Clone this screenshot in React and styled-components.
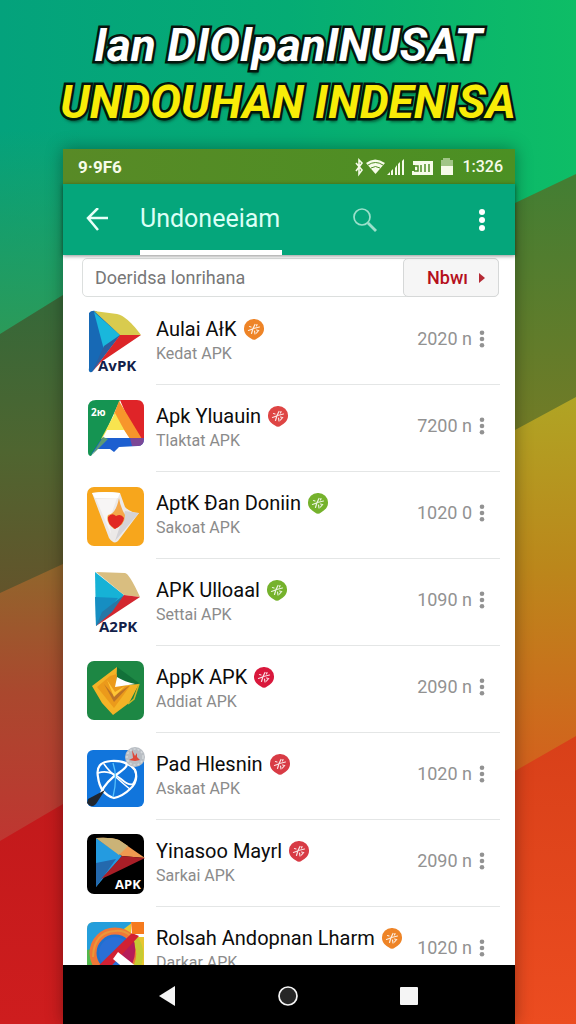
import React from 'react';
import styled, { createGlobalStyle } from 'styled-components';

const GlobalStyle = createGlobalStyle`
	* {
		box-sizing: border-box;
	}
	body {
		margin: 0;
		font-family: Roboto, "Liberation Sans", sans-serif;
	}
	h1, h2, p, ul {
		margin: 0;
		padding: 0;
	}
	button {
		font-family: inherit;
		border: 0;
		padding: 0;
		background: none;
		cursor: pointer;
	}
`;

const Page = styled.div`
	position: relative;
	display: flex;
	flex-direction: column;
	height: 100vh;
	overflow: hidden;
`;

const Backdrop = styled.svg`
	position: absolute;
	inset: 0;
	width: 100%;
	height: 100%;
	z-index: -1;
`;

const Headline = styled.h1`
	display: flex;
	flex-direction: column;
	align-items: center;
	padding-top: 17px;
	height: 149px;
	flex-shrink: 0;
	white-space: nowrap;
	font-style: italic;
	font-weight: 700;
`;

const HeadlineLine = styled.span`
	font-size: 46px;
	line-height: 57px;
	color: ${props => props.$color};
	-webkit-text-stroke: 5px #07130c;
	paint-order: stroke fill;
	text-shadow: 1px 4px 3px rgba(0, 30, 15, 0.55);
`;

const Phone = styled.main`
	display: flex;
	flex-direction: column;
	flex: 1;
	min-height: 0;
	margin: 0 61px 0 63px;
	background: #fff;
	box-shadow: 0 0 16px rgba(0, 0, 0, 0.35);
`;

const StatusBar = styled.div`
	display: flex;
	align-items: center;
	height: 35px;
	flex-shrink: 0;
	padding: 0 12px 0 15px;
	background: linear-gradient(90deg, #588a26, #4b9023);
	color: #f6fbe9;
	font-size: 17px;
	font-weight: 700;
`;

const StatusIcons = styled.svg`
	width: 102px;
	height: 20px;
	margin-left: auto;
	margin-right: 6px;
`;

const BatteryText = styled.span`
	font-size: 16px;
	font-weight: 500;
`;

const AppBar = styled.header`
	display: flex;
	align-items: center;
	position: relative;
	z-index: 1;
	height: 71px;
	flex-shrink: 0;
	padding: 0 21px;
	background: #05a67b;
	box-shadow: 0 1px 4px rgba(0, 0, 0, 0.45);
`;

const IconButton = styled.button`
	display: flex;
	align-items: center;
	justify-content: center;
	width: 26px;
	height: 32px;
`;

const Tab = styled.h2`
	align-self: stretch;
	width: 142px;
	margin-left: 30px;
	margin-right: 70px;
	border-bottom: 5px solid #fff;
	color: #dcfff6;
	font-size: 25px;
	font-weight: 400;
	line-height: 70px;
`;

const SearchRow = styled.form`
	display: flex;
	height: 39px;
	flex-shrink: 0;
	margin: 3px 16px 0 19px;
	border: 1px solid #dcdfde;
	border-radius: 5px;
`;

const SearchInput = styled.input`
	flex: 1;
	min-width: 0;
	border: 0;
	padding: 0 12px;
	background: none;
	font-family: inherit;
	font-size: 18px;
	color: #777;
	outline: none;
	&::placeholder {
		color: #777;
		opacity: 1;
	}
`;

const NowButton = styled.button`
	display: flex;
	align-items: center;
	justify-content: space-between;
	width: 96px;
	padding: 0 13px 0 23px;
	margin: -1px;
	background: #f6f6f6;
	border: 1px solid #d6d8d8;
	border-radius: 5px;
	color: #b5101c;
	font-size: 18px;
	font-weight: 500;
`;

const List = styled.ul`
	flex: 1;
	min-height: 0;
	overflow: hidden;
	list-style: none;
	padding: 1px 15px 0 24px;
`;

const Row = styled.li`
	display: flex;
	align-items: center;
	height: 87px;
`;

const AppIcon = styled.svg`
	width: 58px;
	height: 64px;
	flex-shrink: 0;
	margin-right: 11px;
	overflow: visible;
`;

const RowBody = styled.div`
	display: flex;
	align-items: center;
	flex: 1;
	align-self: stretch;
	border-bottom: 1px solid #e4e6e6;
`;

const Names = styled.div`
	flex: 1;
`;

const AppName = styled.p`
	display: flex;
	align-items: center;
	gap: 7px;
	color: #0c0c0c;
	font-size: 20px;
	line-height: 26px;
	white-space: nowrap;
`;

const Source = styled.p`
	color: #8b8b8b;
	font-size: 16px;
	line-height: 24px;
`;

const Amount = styled.span`
	color: #929292;
	font-size: 18px;
	line-height: 24px;
	white-space: nowrap;
	margin-bottom: 4px;
	margin-right: 4px;
`;

const MoreButton = styled(IconButton)`
	width: 12px;
	margin-right: 12px;
	margin-bottom: 4px;
`;

const MenuButton = styled(IconButton)`
	width: 12px;
	margin-left: auto;
	margin-right: 6px;
`;

const NavBar = styled.nav`
	display: flex;
	align-items: center;
	justify-content: space-between;
	height: 59px;
	flex-shrink: 0;
	padding: 2px 93px 0 91px;
	background: #000;
`;

function Background() {
	return (
		<Backdrop viewBox="0 0 576 1024" preserveAspectRatio="none" aria-hidden="true">
			<defs>
				<linearGradient id="top" x1="0" y1="0" x2="1" y2="0">
					<stop offset="0" stopColor="#04a27c" />
					<stop offset="0.5" stopColor="#05ac74" />
					<stop offset="1" stopColor="#0ebd66" />
				</linearGradient>
				<linearGradient id="topLeft" gradientUnits="userSpaceOnUse" x1="0" y1="130" x2="0" y2="334">
					<stop offset="0" stopColor="#2b9a59" stopOpacity="0" />
					<stop offset="1" stopColor="#2b9a59" />
				</linearGradient>
				<linearGradient id="l1" gradientUnits="userSpaceOnUse" x1="0" y1="310" x2="0" y2="593">
					<stop offset="0" stopColor="#376838" />
					<stop offset="0.5" stopColor="#4f6530" />
					<stop offset="1" stopColor="#63542b" />
				</linearGradient>
				<linearGradient id="l2" gradientUnits="userSpaceOnUse" x1="0" y1="570" x2="0" y2="841">
					<stop offset="0" stopColor="#91652c" />
					<stop offset="0.45" stopColor="#aa482e" />
					<stop offset="1" stopColor="#bf3631" />
				</linearGradient>
				<linearGradient id="l3" x1="0" y1="0" x2="0" y2="1">
					<stop offset="0" stopColor="#bd181a" />
					<stop offset="1" stopColor="#ce1d1e" />
				</linearGradient>
				<linearGradient id="r1" gradientUnits="userSpaceOnUse" x1="0" y1="180" x2="0" y2="430">
					<stop offset="0" stopColor="#437e33" />
					<stop offset="1" stopColor="#727b26" />
				</linearGradient>
				<linearGradient id="r2" gradientUnits="userSpaceOnUse" x1="0" y1="400" x2="0" y2="770">
					<stop offset="0" stopColor="#b0a424" />
					<stop offset="0.45" stopColor="#bb871b" />
					<stop offset="1" stopColor="#d3611d" />
				</linearGradient>
				<linearGradient id="r3" x1="0" y1="0" x2="0" y2="1">
					<stop offset="0" stopColor="#d84019" />
					<stop offset="1" stopColor="#ec4c20" />
				</linearGradient>
			</defs>
			<rect width="576" height="1024" fill="url(#top)" />
			<path d="M0 130H80V334H0z" fill="url(#topLeft)" />
			<path d="M0 334L63 295L288 250V600L0 593z" fill="url(#l1)" />
			<path d="M0 593L63 564L288 500V841H0z" fill="url(#l2)" />
			<path d="M0 841L63 804L288 700V1024H0z" fill="url(#l3)" />
			<path d="M288 280L515 203L576 174V440H288z" fill="url(#r1)" />
			<path d="M288 530L515 430L576 397V780H288z" fill="url(#r2)" />
			<path d="M288 870L515 771L576 736V1024H288z" fill="url(#r3)" />
		</Backdrop>
	);
}

function Badge({ color }) {
	return (
		<svg width="20" height="23" viewBox="0 0 20 23" aria-hidden="true">
			<path d="M10 1a9.700 9.700 0 0 1 10 10c0 5-4 7.500-7 9.500Q10 23 7 20.500C4 18.500 0 16 0 11A9.700 9.700 0 0 1 10 1z" fill={color} />
			<path d="M4.500 12.500l4-1.500M9.500 10.500l6-1.500M11 6.500l-2 4-1.500 5M12.500 12l2 .5-2 2.500M5.500 8.500l1.500.5M10.500 13l.5 3M13 6.500l-.5 1.500" fill="none" stroke="#fff" strokeOpacity="0.85" strokeWidth="1.200" strokeLinecap="round" />
		</svg>
	);
}

function Dots({ color, r }) {
	return (
		<svg width="8" height="26" viewBox="0 0 8 26" fill={color} aria-hidden="true">
			<circle cx="4" cy={13 - r * 2.7} r={r} />
			<circle cx="4" cy="13" r={r} />
			<circle cx="4" cy={13 + r * 2.7} r={r} />
		</svg>
	);
}

const iconLabel = {
	fontFamily: '"Open Sans", sans-serif',
	fontWeight: 700,
	fontSize: 15,
};

const icons = {
	play: (
		<>
			<path d="M2 3Q4 0 9 1L34 24L5 62Q1 63 2 58z" fill="#1769b5" />
			<path d="M7 2L33 25L17 40z" fill="#19b7dc" />
			<path d="M7 1L30 4Q40 6 54 25L33 25z" fill="#d8cb4e" />
			<path d="M33 25L54 25L14 52L5 62z" fill="#dc2528" />
			<path d="M5 62L20 42L33 25L17 36z" fill="#2b5e9f" />
			<text x="11" y="61" fill="#122049" {...iconLabel}>AvPK</text>
		</>
	),
	drive: (
		<>
			<path d="M9 3H33L16 41L4 59Q1 59 1 55V11Q1 3 9 3z" fill="#159452" />
			<path d="M33 3H50Q57 3 57 11V43H50z" fill="#df2428" />
			<path d="M32 4L55 42H42L27 17z" fill="#f7962b" />
			<path d="M28 16L42 42H14z" fill="#f8e44f" />
			<path d="M20 33H37L43 42H15z" fill="#fff" />
			<path d="M15 41H57Q57 49 51 49L32 50L27 55L23 52L9 52L3 59z" fill="#1d5fd0" />
			<path d="M43 41H57Q57 49 51 49H45z" fill="#7b4796" />
			<path d="M16 40L21 42L5 58z" fill="#5c9a74" />
			<text x="4" y="19" fill="#fff" {...iconLabel} fontSize="10">2ю</text>
		</>
	),
	paper: (
		<>
			<rect x="0" y="3" width="57" height="59" rx="7" fill="#f7a61c" />
			<path d="M5 9Q18 7 33 9L38 23Q44 29 52 29L31 57Q27 61 22 54z" fill="#ece9e8" />
			<path d="M5 9Q18 7 33 9L31 14H8z" fill="#fff" />
			<path d="M9 15L30 14L22 37L24 50z" fill="#f7f5f5" />
			<path d="M38 27L52 29L28 57z" fill="#d5d3d6" />
			<path d="M32 14Q33 22 38 31Q38 42 27 45Q18 38 21 31Q29 30 32 14z" fill="#f4a84a" />
			<path d="M21 33Q25 28 29 32Q34 29 37 34Q36 41 28 45Q20 40 21 33z" fill="#e12822" />
		</>
	),
	playBeige: (
		<>
			<path d="M8 1L37 24L9 55z" fill="#16b2d6" />
			<path d="M8 26L31 27L9 55z" fill="#168ec2" />
			<path d="M9 1L38 2Q42 2 53 26L37 24z" fill="#d9be80" />
			<path d="M37 24L53 26L9 55L21 42z" fill="#d3272f" />
			<path d="M9 55L15 41L37 24L25 41z" fill="#2777a6" />
			<text x="12" y="61" fill="#122049" {...iconLabel}>A2PK</text>
		</>
	),
	gold: (
		<>
			<rect x="0" y="3" width="57" height="59" rx="7" fill="#1d8744" />
			<path d="M30 9L52 25L50 34L30 30z" fill="#127139" />
			<path d="M30 9L29 28L52 26L42 45L26 57L15 45L5 28z" fill="#f4b326" />
			<path d="M23 18L30 16L29 27L43 28L27 50L10 29z" fill="#eb9a1b" />
			<path d="M17 26L27 38L43 27L27 44z" fill="#bd7427" />
			<path d="M20 22L28 34L38 28L27 39z" fill="#ffc636" />
			<path d="M30 19Q38 24 48 26L28 29z" fill="#fff" />
			<path d="M52 26L47 41L41 46" fill="none" stroke="#d1b424" strokeWidth="1.500" />
		</>
	),
	globe: (
		<>
			<rect x="0" y="5" width="57" height="57" rx="6" fill="#1175dc" />
			<g fill="none" stroke="#fff" strokeWidth="2.200" strokeLinecap="round">
				<path d="M11 32Q8 17 24 16Q40 15 48 25Q52 36 43 44Q36 51 27 53Q13 49 11 32z" />
				<path d="M11 28Q22 24 34 34Q42 41 46 39Q53 28 44 20" strokeWidth="1.800" />
				<path d="M14 48Q18 37 33 27Q43 20 38 18" />
				<path d="M17 19Q21 25 30 33Q40 42 43 44" strokeWidth="1.500" />
			</g>
			<path d="M26 18Q31 32 26 52" fill="none" stroke="#58c3fc" strokeWidth="1.300" />
			<path d="M18 45L9 59Q4 64 0 58L1 54z" fill="#20262e" />
			<circle cx="48" cy="12" r="10" fill="#b9bec4" />
			<circle cx="48" cy="12" r="8" fill="none" stroke="#d4d8db" strokeWidth="1.500" strokeDasharray="2 2" />
			<path d="M45 5L48 11L50 8V12L53 15L48 16L42 15L46 13z" fill="#df493a" />
		</>
	),
	playBlack: (
		<>
			<rect x="0" y="2" width="57" height="60" rx="7" fill="#000" />
			<path d="M9 6L35 24L9 55z" fill="#249be0" />
			<path d="M9 31L29 27L9 55z" fill="#2469ad" />
			<path d="M9 6Q24 5 32 8L58 26L35 24z" fill="#ef9950" />
			<path d="M9 6Q24 5 32 8L41 14L32 23z" fill="#cbb377" />
			<path d="M35 24L58 26L23 43L14 47z" fill="#a91e27" />
			<text x="28" y="57" fill="#fff" {...iconLabel} fontSize="13">APK</text>
		</>
	),
	ring: (
		<>
			<rect x="0" y="3" width="57" height="59" rx="7" fill="#e7c631" />
			<path d="M0 39V10Q0 3 7 3H46L13 28z" fill="#249edb" />
			<path d="M0 31L12 28V62H0z" fill="#52b84c" />
			<path d="M44 3H57V18H44z" fill="#fff" />
			<circle cx="28" cy="34" r="22" fill="#1e70cf" stroke="#f07737" strokeWidth="7" />
			<path d="M47 19Q58 33 48 52" fill="none" stroke="#c6cb33" strokeWidth="7" />
			<path d="M6 38Q7 13 28 12Q37 11 44 17" fill="none" stroke="#e99839" strokeWidth="2" />
			<circle cx="28" cy="34" r="16" fill="#2a6fd6" />
			<path d="M28 34L45 17Q52 31 44 48z" fill="#b61c58" />
			<path d="M45 14L52 17L16 56H2z" fill="#d22133" />
			<path d="M31 33L55 52L51 61L26 40z" fill="#fff" />
			<path d="M44 3H57V15H45z" fill="#f57a1e" />
		</>
	),
};

const apps = [
	{ icon: 'play', name: 'Aulai AłK', source: 'Kedat APK', amount: '2020 n', badge: '#ee8427' },
	{ icon: 'drive', name: 'Apk Yluauin', source: 'Tlaktat APK', amount: '7200 n', badge: '#de4544' },
	{ icon: 'paper', name: 'AptK Đan Doniin', source: 'Sakoat APK', amount: '1020 0', badge: '#75b22c' },
	{ icon: 'playBeige', name: 'APK Ulloaal', source: 'Settai APK', amount: '1090 n', badge: '#75b22c' },
	{ icon: 'gold', name: 'AppK APK', source: 'Addiat APK', amount: '2090 n', badge: '#d9183c' },
	{ icon: 'globe', name: 'Pad Hlesnin', source: 'Askaat APK', amount: '1020 n', badge: '#d83b45' },
	{ icon: 'playBlack', name: 'Yinasoo Mayrl', source: 'Sarkai APK', amount: '2090 n', badge: '#d83b45' },
	{ icon: 'ring', name: 'Rolsah Andopnan Lharm', source: 'Darkar APK', amount: '1020 n', badge: '#ee8427' },
];

function AppRow({ app }) {
	return (
		<Row>
			<AppIcon viewBox="0 0 58 64" aria-hidden="true">{icons[app.icon]}</AppIcon>
			<RowBody>
				<Names>
					<AppName>{app.name}<Badge color={app.badge} /></AppName>
					<Source>{app.source}</Source>
				</Names>
				<Amount>{app.amount}</Amount>
				<MoreButton type="button" aria-label="More"><Dots color="#929292" r={2.3} /></MoreButton>
			</RowBody>
		</Row>
	);
}

function App() {
	return (
		<Page>
			<GlobalStyle />
			<Background />
			<Headline>
				<HeadlineLine $color="#fff">Ian DIOlpanINUSAT</HeadlineLine>
				<HeadlineLine $color="#f8ec08">UNDOUHAN INDENISA</HeadlineLine>
			</Headline>

			<Phone>
				<StatusBar>
					<span>9·9F6</span>
					<StatusIcons viewBox="0 0 102 20" fill="#f6fbe9" aria-hidden="true">
						<path d="M2 6L8 13L5 17V3L8 6L2 14" fill="none" stroke="#f6fbe9" strokeWidth="1.600" />
						<path d="M12 6Q21 -1 31 6L21.500 17z" />
						<path d="M14 8Q21.500 3 29 8M17 11Q21.500 8 26 11" fill="none" stroke="#4f8e24" strokeWidth="1" />
						<path d="M33 18L36 15V18zM37 14L39 12V18H37zM41 11L43 8V18H41zM44 7L46 5V18H44zM48 4L50 2V18H48z" />
						<path d="M59 4H79V18H58V14H61V8H59z" />
						<path d="M60 9H64V14H60M67 15V8M71 15V7M75 15V7" fill="none" stroke="#4f8e24" strokeWidth="1.500" />
						<path d="M87 3H89V1H96V3H99V10H87z" fillOpacity="0.5" />
						<path d="M87 9H99V18H87z" />
					</StatusIcons>
					<BatteryText>1:326</BatteryText>
				</StatusBar>

				<AppBar>
					<IconButton type="button" aria-label="Back">
						<svg width="24" height="24" viewBox="0 0 24 24" fill="none" stroke="#e8fff8" strokeWidth="2.500">
							<path d="M23 10H3M13 0L3 10L13 22" />
						</svg>
					</IconButton>
					<Tab>Undoneeiam</Tab>
					<IconButton type="button" aria-label="Search">
						<svg width="26" height="26" viewBox="0 0 26 26" fill="none" stroke="#9ce0cb">
							<circle cx="10" cy="10" r="8" strokeWidth="1.700" />
							<path d="M16 16L24 24" strokeWidth="2.800" />
						</svg>
					</IconButton>
					<MenuButton type="button" aria-label="Menu"><Dots color="#fff" r={3} /></MenuButton>
				</AppBar>

				<SearchRow>
					<SearchInput aria-label="Search" placeholder="Doeridsa lonrihana" />
					<NowButton type="button">
						Nbwı
						<svg width="6" height="10" viewBox="0 0 6 10" fill="#b52a35" aria-hidden="true"><path d="M0 0L6 5L0 10z" /></svg>
					</NowButton>
				</SearchRow>

				<List>
					{apps.map(app => <AppRow key={app.name} app={app} />)}
				</List>

				<NavBar>
					<IconButton type="button" aria-label="Back">
						<svg width="18" height="20" viewBox="0 0 18 20" fill="#f5f5f5"><path d="M17 0V20L1 10z" /></svg>
					</IconButton>
					<IconButton type="button" aria-label="Home">
						<svg width="20" height="20" viewBox="0 0 20 20"><circle cx="10" cy="10" r="9" fill="#262626" stroke="#f5f5f5" strokeWidth="1.700" /></svg>
					</IconButton>
					<IconButton type="button" aria-label="Recent apps">
						<svg width="18" height="18" viewBox="0 0 18 18"><rect width="18" height="18" rx="1" fill="#f5f5f5" /></svg>
					</IconButton>
				</NavBar>
			</Phone>
		</Page>
	);
}

export default App;
